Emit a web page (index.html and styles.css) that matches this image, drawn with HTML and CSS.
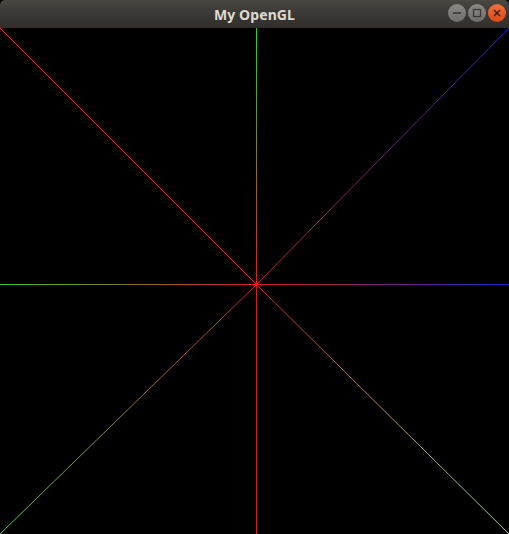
FILE: index.html
```html
<!DOCTYPE html>
<html>
<head>
<meta charset="utf-8">
<link rel="stylesheet" href="styles.css">
</head>
<body>
<div class="window">
  <div class="titlebar">
    <span class="title">My OpenGL</span>
    <div class="controls">
      <span class="btn btn-min"><svg width="18" height="18" viewBox="0 0 18 18"><line x1="5" y1="9" x2="13" y2="9" stroke="#3a3935" stroke-width="1.6"/></svg></span>
      <span class="btn btn-max"><svg width="18" height="18" viewBox="0 0 18 18"><rect x="5.5" y="5.5" width="7" height="7" fill="none" stroke="#3a3935" stroke-width="1.3"/></svg></span>
      <span class="btn btn-close"><svg width="18" height="18" viewBox="0 0 18 18"><path d="M6 6 L12 12 M12 6 L6 12" stroke="#3a2218" stroke-width="1.5"/></svg></span>
    </div>
  </div>
  <svg class="canvas" width="509" height="506" viewBox="0 0 509 506">
    <defs>
      <linearGradient id="gTop" gradientUnits="userSpaceOnUse" x1="0" y1="0" x2="0" y2="256"><stop offset="0" stop-color="#2fd02f"/><stop offset="1" stop-color="#d82020"/></linearGradient>
      <linearGradient id="gLeft" gradientUnits="userSpaceOnUse" x1="0" y1="0" x2="255" y2="0"><stop offset="0" stop-color="#33c833"/><stop offset="1" stop-color="#d82020"/></linearGradient>
      <linearGradient id="gRight" gradientUnits="userSpaceOnUse" x1="255" y1="0" x2="509" y2="0"><stop offset="0" stop-color="#d82020"/><stop offset="1" stop-color="#2020d0"/></linearGradient>
      <linearGradient id="gTR" gradientUnits="userSpaceOnUse" x1="255.5" y1="256.5" x2="509" y2="0"><stop offset="0" stop-color="#c82020"/><stop offset="1" stop-color="#2020b8"/></linearGradient>
      <linearGradient id="gBL" gradientUnits="userSpaceOnUse" x1="255.5" y1="256.5" x2="0" y2="506"><stop offset="0" stop-color="#c82020"/><stop offset="1" stop-color="#50d050"/></linearGradient>
      <linearGradient id="gBR" gradientUnits="userSpaceOnUse" x1="255.5" y1="256.5" x2="509" y2="506"><stop offset="0" stop-color="#c82020"/><stop offset="1" stop-color="#90e090"/></linearGradient>
    </defs>
    <rect width="509" height="506" fill="#000"/>
    <rect x="256" y="0" width="1" height="256" fill="url(#gTop)"/>
    <rect x="256" y="256" width="1" height="250" fill="#d02020"/>
    <rect x="0" y="256" width="256" height="1" fill="url(#gLeft)"/>
    <rect x="256" y="256" width="253" height="1" fill="url(#gRight)"/>
    <g stroke-width="1" fill="none">
      <line x1="0" y1="0" x2="256.5" y2="256.5" stroke="#c82020"/>
      <line x1="256.5" y1="256.5" x2="509" y2="0" stroke="url(#gTR)"/>
      <line x1="256.5" y1="256.5" x2="0" y2="506" stroke="url(#gBL)"/>
      <line x1="256.5" y1="256.5" x2="509" y2="506" stroke="url(#gBR)"/>
    </g>
    <rect x="255" y="255" width="3" height="3" fill="#e02020"/>
  </svg>
</div>
</body>
</html>
```
FILE: styles.css
```css
html, body {
  margin: 0;
  padding: 0;
  background: #000;
}
.window {
  width: 509px;
  height: 534px;
  display: flex;
  flex-direction: column;
  overflow: hidden;
}
.titlebar {
  position: relative;
  height: 28px;
  flex: 0 0 28px;
  background: linear-gradient(#4a4843, #3c3b37 40%, #2f2e2a);
  border-radius: 5px 5px 0 0;
  display: flex;
  align-items: center;
  justify-content: center;
}
.title {
  font-family: "Noto Sans", "DejaVu Sans", sans-serif;
  font-weight: bold;
  font-size: 14px;
  color: #dfdbd2;
  letter-spacing: 0.1px;
}
.controls {
  position: absolute;
  right: 3px;
  top: 4px;
  display: flex;
  gap: 2px;
}
.btn {
  width: 18px;
  height: 18px;
  border-radius: 50%;
  display: block;
}
.btn svg { display: block; }
.btn-min, .btn-max {
  background: linear-gradient(#8a8985, #6e6d69);
}
.btn-close {
  background: linear-gradient(#f0703f, #dd4814);
}
.canvas {
  display: block;
  flex: 0 0 506px;
}
```
